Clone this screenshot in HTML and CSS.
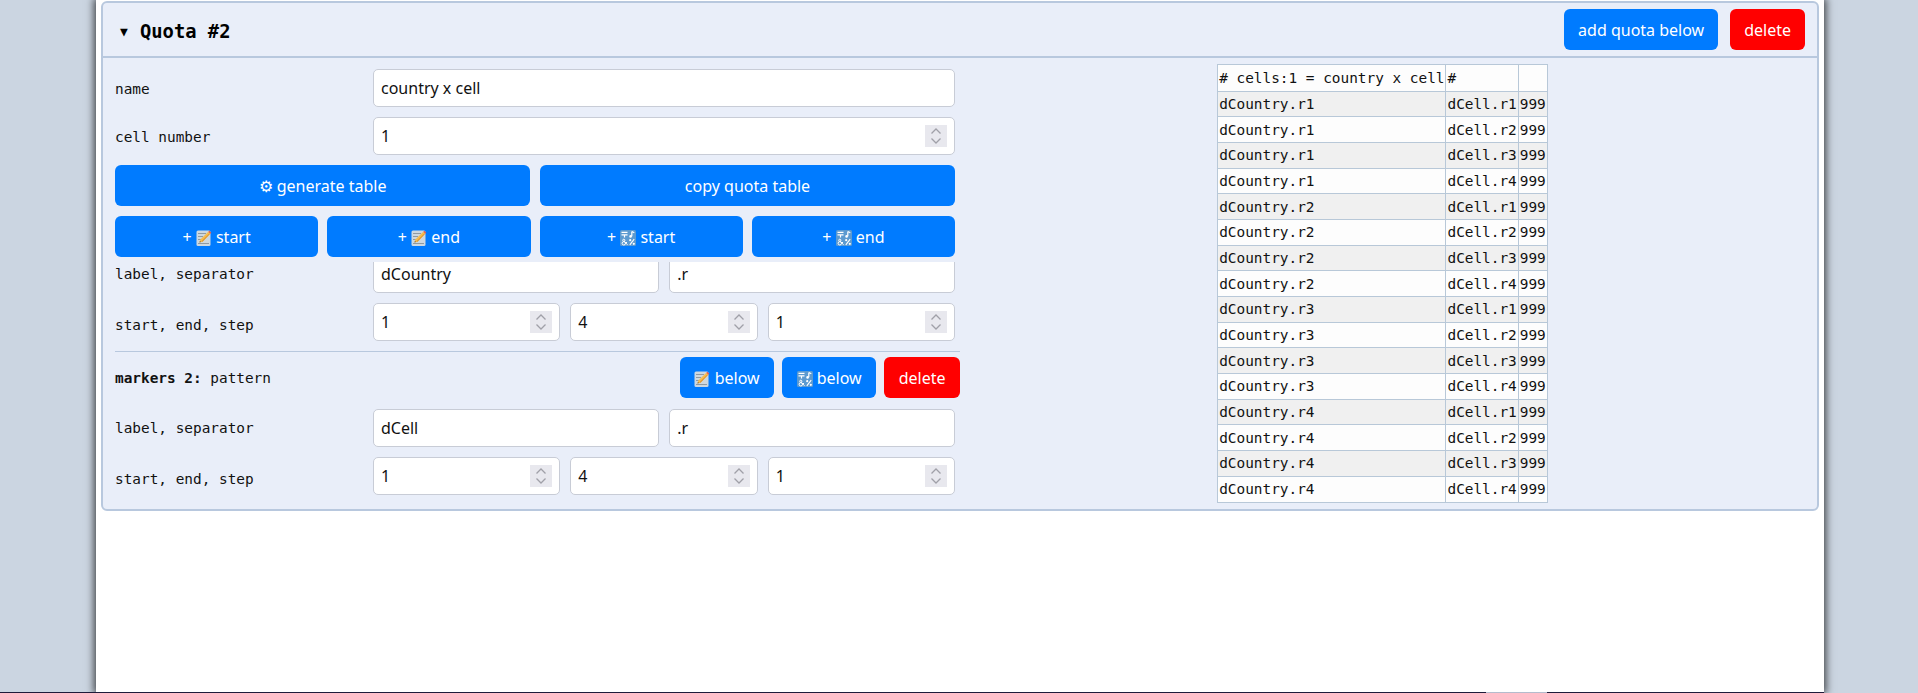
FILE: index.html
```html
<!DOCTYPE html>
<html lang="en">
<head>
    <meta charset="UTF-8">
    <meta name="viewport" content="width=device-width, initial-scale=1.0">
    <title>Quota builder</title>
    <link rel="stylesheet" href="styles.css">
</head>
<body>
    <svg class="sprites" width="0" height="0">
        <symbol id="memo" viewBox="0 0 16 16">
            <rect x="0.5" y="0.5" width="14" height="15.500" rx="1.500" fill="#cdd8e0"/>
            <path d="M2 3.500h8M2 6.500h5M2 9.500h3M2 13.500h11" stroke="#8f9aa3" stroke-width="1"/>
            <path d="M3.500 12.500l.8-3L12.300 1.700l2 2L6.500 11.700z" fill="#f6bd4e"/>
            <path d="M5.500 11.200l7.800-7.700.6.600L6.500 11.700z" fill="#dd9430"/>
            <path d="M12.300 1.700L13.300 .7l2 2-1 1z" fill="#e0564f"/>
            <path d="M3.500 12.500l.4-1.500 1.100 1.100z" fill="#5c4a3a"/>
        </symbol>
        <symbol id="symbols" viewBox="0 0 16 16">
            <rect width="16" height="16" rx="1.500" fill="#5c9ad0"/>
            <path d="M1.500 2.300h6M1.500 4.800h6M4.500 4.800v2.700" stroke="#fff" stroke-width="1.200" fill="none"/>
            <path d="M11.800 1.500v4.800M11.800 1.500l2.500 1.200" stroke="#fff" stroke-width="1.200" fill="none"/>
            <circle cx="10.600" cy="6.400" r="1.300" fill="#fff"/>
            <circle cx="3.800" cy="10.300" r="1.100" stroke="#fff" stroke-width="1" fill="none"/>
            <circle cx="3.800" cy="13.300" r="1.700" stroke="#fff" stroke-width="1" fill="none"/>
            <path d="M4.500 11.500l3 3.300M5.500 13.500l1.500-1.500" stroke="#fff" stroke-width="1" fill="none"/>
            <path d="M9.800 14.800l4.400-5.600" stroke="#fff" stroke-width="1.100" fill="none"/>
            <circle cx="10.200" cy="10.200" r="1.100" fill="#fff"/>
            <circle cx="13.800" cy="13.800" r="1.100" fill="#fff"/>
        </symbol>
        <symbol id="spin" viewBox="0 0 22 22">
            <path d="M6.500 8.500L11 4l4.500 4.500M6.500 13.500L11 18l4.500-4.500" stroke="#a0a0a8" stroke-width="1.300" fill="none"/>
        </symbol>
    </svg>

    <main class="page">
        <section class="quota">
            <header class="quota-head">
                <h2 class="quota-title"><span class="arrow">▼</span>Quota #2</h2>
                <div class="quota-actions">
                    <button class="btn">add quota below</button>
                    <button class="btn btn-red">delete</button>
                </div>
            </header>

            <div class="quota-body">
                <div class="form">
                    <div class="row row-main">
                        <label>name</label>
                        <div class="fields"><input class="input" type="text" value="country x cell"></div>
                    </div>
                    <div class="row row-main">
                        <label>cell number</label>
                        <div class="fields">
                            <div class="input num"><input type="text" value="1"><svg class="spin"><use href="#spin"/></svg></div>
                        </div>
                    </div>

                    <div class="toolbar">
                        <div class="btn-row">
                            <button class="btn">⚙ generate table</button>
                            <button class="btn">copy quota table</button>
                        </div>
                        <div class="btn-row btn-row-tight">
                            <button class="btn">+ <svg class="emoji"><use href="#memo"/></svg> start</button>
                            <button class="btn">+ <svg class="emoji"><use href="#memo"/></svg> end</button>
                            <button class="btn">+ <svg class="emoji"><use href="#symbols"/></svg> start</button>
                            <button class="btn">+ <svg class="emoji"><use href="#symbols"/></svg> end</button>
                        </div>
                    </div>

                    <div class="row">
                        <label>label, separator</label>
                        <div class="fields">
                            <input class="input" type="text" value="dCountry">
                            <input class="input" type="text" value=".r">
                        </div>
                    </div>
                    <div class="row row-range">
                        <label>start, end, step</label>
                        <div class="fields">
                            <div class="input num"><input type="text" value="1"><svg class="spin"><use href="#spin"/></svg></div>
                            <div class="input num"><input type="text" value="4"><svg class="spin"><use href="#spin"/></svg></div>
                            <div class="input num"><input type="text" value="1"><svg class="spin"><use href="#spin"/></svg></div>
                        </div>
                    </div>

                    <div class="marker-head">
                        <span class="marker-name"><b>markers 2:</b> pattern</span>
                        <div class="marker-actions">
                            <button class="btn"><svg class="emoji"><use href="#memo"/></svg> below</button>
                            <button class="btn"><svg class="emoji"><use href="#symbols"/></svg> below</button>
                            <button class="btn btn-red">delete</button>
                        </div>
                    </div>
                    <div class="row">
                        <label>label, separator</label>
                        <div class="fields">
                            <input class="input" type="text" value="dCell">
                            <input class="input" type="text" value=".r">
                        </div>
                    </div>
                    <div class="row row-range">
                        <label>start, end, step</label>
                        <div class="fields">
                            <div class="input num"><input type="text" value="1"><svg class="spin"><use href="#spin"/></svg></div>
                            <div class="input num"><input type="text" value="4"><svg class="spin"><use href="#spin"/></svg></div>
                            <div class="input num"><input type="text" value="1"><svg class="spin"><use href="#spin"/></svg></div>
                        </div>
                    </div>
                </div>

                <div class="preview">
                    <table class="quota-table">
                        <thead>
                            <tr><th># cells:1 = country x cell</th><th>#</th><th></th></tr>
                        </thead>
                        <tbody>
                            <tr><td>dCountry.r1</td><td>dCell.r1</td><td>999</td></tr>
                            <tr><td>dCountry.r1</td><td>dCell.r2</td><td>999</td></tr>
                            <tr><td>dCountry.r1</td><td>dCell.r3</td><td>999</td></tr>
                            <tr><td>dCountry.r1</td><td>dCell.r4</td><td>999</td></tr>
                            <tr><td>dCountry.r2</td><td>dCell.r1</td><td>999</td></tr>
                            <tr><td>dCountry.r2</td><td>dCell.r2</td><td>999</td></tr>
                            <tr><td>dCountry.r2</td><td>dCell.r3</td><td>999</td></tr>
                            <tr><td>dCountry.r2</td><td>dCell.r4</td><td>999</td></tr>
                            <tr><td>dCountry.r3</td><td>dCell.r1</td><td>999</td></tr>
                            <tr><td>dCountry.r3</td><td>dCell.r2</td><td>999</td></tr>
                            <tr><td>dCountry.r3</td><td>dCell.r3</td><td>999</td></tr>
                            <tr><td>dCountry.r3</td><td>dCell.r4</td><td>999</td></tr>
                            <tr><td>dCountry.r4</td><td>dCell.r1</td><td>999</td></tr>
                            <tr><td>dCountry.r4</td><td>dCell.r2</td><td>999</td></tr>
                            <tr><td>dCountry.r4</td><td>dCell.r3</td><td>999</td></tr>
                            <tr><td>dCountry.r4</td><td>dCell.r4</td><td>999</td></tr>
                        </tbody>
                    </table>
                </div>
            </div>
        </section>
    </main>

    <footer class="edge"><span class="edge-thumb"></span></footer>
</body>
</html>
```

FILE: styles.css
```css
* {
    box-sizing: border-box;
}
html, body {
    margin: 0;
    height: 693px;
    overflow: hidden;
}
body {
    display: flex;
    flex-direction: column;
    background-color: #cbd5e1;
    font-family: "Noto Sans", sans-serif;
    font-size: 16px;
    color: #111;
}
.sprites {
    display: block;
    height: 0;
}
.page {
    flex: 1;
    width: 1728px;
    margin-left: 96px;
    padding: 1px 5px 0;
    background: white;
    box-shadow: 0 0 8px 2px rgba(0, 0, 0, 0.7);
}
.edge {
    display: flex;
    width: 1824px;
    height: 1px;
    background-color: #1e1b3a;
    position: relative;
}
.edge-thumb {
    width: 61px;
    margin-left: 1486px;
    background-color: #b4bccd;
}

/* quota card */
.quota {
    height: 510px;
    background-color: #e9eef9;
    border: 2px solid #b8c8de;
    border-radius: 6px;
}
.quota-head {
    display: flex;
    justify-content: space-between;
    align-items: center;
    height: 55px;
    padding: 0 12px 0 17px;
    border-bottom: 2px solid #b8c8de;
}
.quota-title {
    margin: 0;
    padding-top: 3px;
    font-family: "DejaVu Sans Mono", monospace;
    font-size: 18.8px;
    font-weight: bold;
    color: black;
}
.arrow {
    display: inline-block;
    width: 20px;
    font-size: 13px;
    vertical-align: 2px;
}
.quota-actions {
    display: flex;
    gap: 12px;
}
.quota-body {
    display: grid;
    grid-template-columns: 845px 845px;
    padding: 0 12px;
}

/* buttons */
.btn {
    height: 41px;
    padding: 0 14px;
    border: none;
    border-radius: 6px;
    background-color: #007bff;
    color: white;
    font-family: "Noto Sans", sans-serif;
    font-size: 16px;
    white-space: nowrap;
    cursor: pointer;
}
.btn-red {
    background-color: #ff0000;
}
.emoji {
    width: 16px;
    height: 16px;
    vertical-align: -3px;
}

/* form rows */
.form {
    padding-top: 11px;
}
.row {
    display: grid;
    grid-template-columns: 258px minmax(0, 1fr);
    align-items: center;
    margin-bottom: 10px;
    padding-right: 5px;
}
.row label {
    font-family: "DejaVu Sans Mono", monospace;
    font-size: 14.4px;
}
.row-main label {
    padding-top: 2px;
}
.row-range label {
    padding-top: 5px;
}
.fields {
    display: flex;
    gap: 10.5px;
}
.row-range .fields {
    gap: 10px;
}
.input {
    flex: 1;
    min-width: 0;
    width: 100%;
    height: 38px;
    padding: 0 7px;
    background: white;
    border: 1px solid #c8ccd6;
    border-radius: 5px;
    font-family: "Noto Sans", sans-serif;
    font-size: 16px;
    color: #111;
}
.num {
    display: flex;
    align-items: center;
}
.num input {
    flex: 1;
    min-width: 0;
    width: 100%;
    padding: 0;
    border: none;
    outline: none;
    font: inherit;
    color: inherit;
}
.spin {
    flex: none;
    width: 22px;
    height: 22px;
    background-color: #e8e8ee;
}

.toolbar {
    position: relative;
    z-index: 1;
    display: flex;
    flex-direction: column;
    gap: 10px;
    margin-bottom: -7px;
    padding: 0 5px 5px 0;
    background-color: #e9eef9;
}
.btn-row {
    display: flex;
    gap: 10px;
}
.btn-row-tight {
    gap: 9px;
}
.btn-row .btn {
    flex: 1;
    padding: 0;
}

/* marker header */
.marker-head {
    display: flex;
    justify-content: space-between;
    align-items: center;
    margin-bottom: 11px;
    padding-top: 5px;
    border-top: 1px solid #b8c8de;
}
.marker-name {
    font-family: "DejaVu Sans Mono", monospace;
    font-size: 14.4px;
}
.marker-actions {
    display: flex;
    gap: 8px;
}
.marker-actions .btn {
    padding: 0 14.5px;
}

/* preview table */
.preview {
    display: flex;
    justify-content: center;
    align-items: flex-start;
    padding-top: 6px;
}
.quota-table {
    border-collapse: collapse;
    background-color: #fdfdfd;
    font-family: "DejaVu Sans Mono", monospace;
    font-size: 14.4px;
    color: #111;
}
.quota-table th, .quota-table td {
    height: 25.7px;
    padding: 0 1px;
    border: 1px solid #b8c8d8;
    font-weight: normal;
    text-align: left;
    white-space: nowrap;
}
.quota-table th {
    height: 26.5px;
    padding-top: 1px;
}
.quota-table tbody tr:nth-child(odd) {
    background-color: #f0f0f0;
}
```
